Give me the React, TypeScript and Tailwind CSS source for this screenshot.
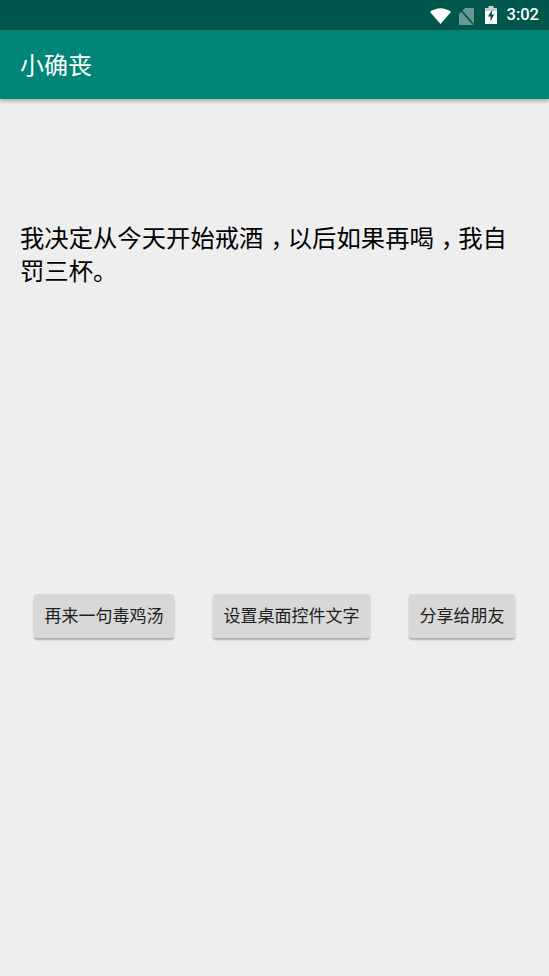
const font = "font-['Roboto','Noto_Sans_CJK_SC',sans-serif]";

function StatusIcons() {
  return (
    <div className="flex items-center">
      <svg width="21" height="16" viewBox="0 0 21 16" className="mr-[8px] mt-[1px]">
        <path d="M0 4 Q10.5 -3.5 21 4 L10.5 16 Z" fill="#ffffff" />
      </svg>
      <svg width="15" height="17" viewBox="0 0 15 17" className="mr-[11px] mt-[2px]">
        <path d="M6 0 H15 V17 H0 V6 Z" fill="#ffffff" opacity="0.4" />
        <path d="M0.5 0.5 L14.5 16.5" stroke="#00574b" strokeWidth="1.6" />
      </svg>
      <svg width="12" height="18" viewBox="0 0 12 18" className="mr-[10px]">
        <path d="M3.5 0 H8.5 V2 H12 V5 H0 V2 H3.5 Z" fill="#ffffff" opacity="0.75" />
        <path d="M0 5 H12 V18 H0 Z" fill="#ffffff" />
        <path d="M7.5 3.5 L2.8 10.5 H5.5 V15.5 L9.2 8.5 H6.6 Z" fill="#00574b" />
      </svg>
    </div>
  );
}

function ActionButton({ label, width }: { label: string; width: string }) {
  return (
    <button
      type="button"
      className={`${width} h-[44px] rounded-[3px] bg-[#d8d8d8] pt-[2px] text-[17px] text-[#1f1f1f] shadow-[0_2px_2px_rgba(0,0,0,0.28)]`}
    >
      {label}
    </button>
  );
}

function Comma() {
  return <span className="pl-[7px] tracking-[-7px]">，</span>;
}

export default function App() {
  return (
    <div className={`flex h-[976px] w-[549px] flex-col overflow-hidden bg-[#eeeeee] ${font}`}>
      <div className="flex h-[30px] items-center justify-end bg-[#00574b] pr-[10px]">
        <StatusIcons />
        <span className="text-[16.5px] font-medium text-white">3:02</span>
      </div>
      <div className="flex h-[69px] items-center bg-[#008577] pl-[20px] pt-[2px] shadow-[0_2px_4px_rgba(0,0,0,0.3)]">
        <h1 className="text-[24px] font-normal text-white">小确丧</h1>
      </div>
      <p className="mt-[123px] h-[372px] px-[20px] text-[24.35px] leading-[33px] text-black">
        我决定从今天开始戒酒<Comma />以后如果再喝<Comma />我自
        <br />
        罚三杯。
      </p>
      <div className="flex justify-between px-[34px]">
        <ActionButton label="再来一句毒鸡汤" width="w-[140px]" />
        <ActionButton label="设置桌面控件文字" width="w-[157px]" />
        <ActionButton label="分享给朋友" width="w-[106px]" />
      </div>
    </div>
  );
}
